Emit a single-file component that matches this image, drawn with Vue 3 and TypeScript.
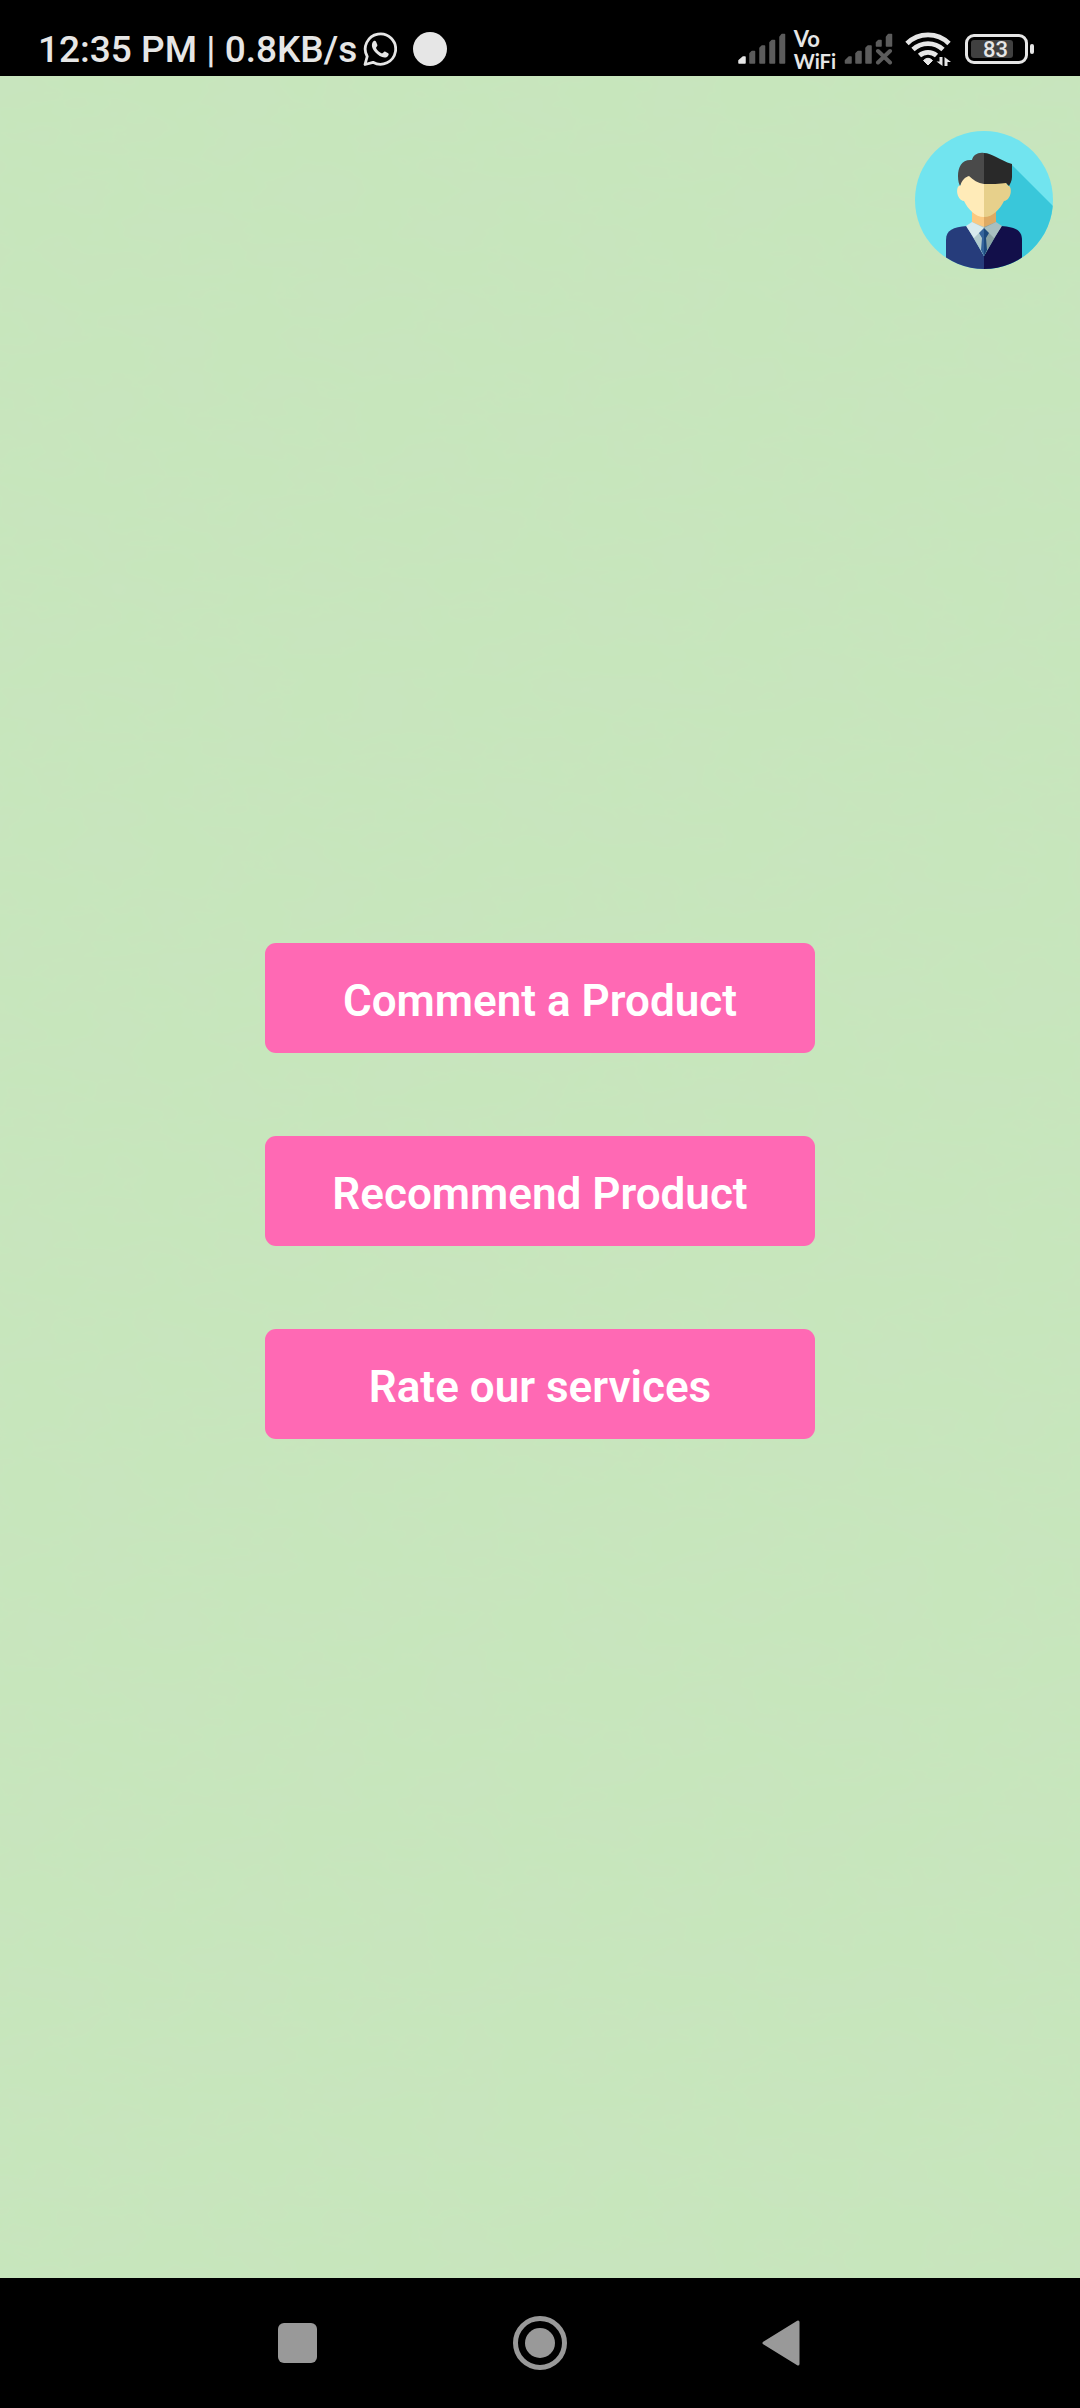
<script setup lang="ts">
interface Action {
  id: string
  label: string
}

const actions: Action[] = [
  { id: 'comment', label: 'Comment a Product' },
  { id: 'recommend', label: 'Recommend Product' },
  { id: 'rate', label: 'Rate our services' },
]
</script>

<template>
  <div class="screen">
    <header class="status">
      <div class="status-left">
        <span class="clock">12:35 PM | 0.8KB/s</span>
        <svg class="whatsapp" width="34" height="36" viewBox="0 0 34 36" aria-hidden="true">
          <path d="M2 33.500 L4.200 25.500 A15.200 15.200 0 1 1 10 31.300 Z" fill="none" stroke="#e6e6e6" stroke-width="2.800" stroke-linejoin="round" />
          <path d="M9.500 11.500 C10.500 9.500 12.500 9.300 13.200 11 L14.400 14 C14.700 15.200 13.200 16 13 17 C14 19.500 16.500 21.600 19 22.500 C20.200 22.400 20.800 20.400 22 20.600 L25.200 22.200 C26.300 23 25.500 25 24 25.900 C20.500 27.800 15.500 24.800 12.500 21.500 C9.500 18.300 8 14.500 9.500 11.500 Z" fill="#e6e6e6" />
        </svg>
        <span class="dot"></span>
      </div>
      <div class="status-right">
        <svg width="48" height="32" viewBox="0 0 48 32" aria-hidden="true">
          <path d="M1 30 V27.500 L5 24 H7 V30 Z" fill="#e6e6e6" stroke="#e6e6e6" stroke-width="1.500" stroke-linejoin="round" />
          <path d="M12 30 V20.500 L14 18.500 H16.500 V30 Z M22 30 V15 L24 13 H26.500 V30 Z M32 30 V9.500 L34 7.500 H36.500 V30 Z M42 30 V4 L44 1.500 H46.500 V30 Z" fill="#5c5c5c" stroke="#5c5c5c" stroke-width="1.500" stroke-linejoin="round" />
        </svg>
        <div class="vowifi"><span class="vo">Vo</span><span>WiFi</span></div>
        <svg width="49" height="32" viewBox="0 0 49 32" aria-hidden="true">
          <path d="M1.500 30 V27.500 L5 24 H7 V30 Z M12 30 V20.500 L14 18.500 H17 V30 Z M22 30 V15 L24 13 H27 V30 Z M32.500 13 V9.500 L34.500 7.500 H37 V13 Z M42.500 13 V4 L44.500 1.500 H47.500 V13 Z" fill="#5c5c5c" stroke="#5c5c5c" stroke-width="1.500" stroke-linejoin="round" />
          <path d="M34 18 L46 29.500 M46 18 L34 29.500" stroke="#5c5c5c" stroke-width="4" stroke-linecap="round" />
        </svg>
        <svg class="wifi" width="47" height="36" viewBox="0 0 47 36" aria-hidden="true">
          <g fill="none" stroke="#e6e6e6" stroke-width="4.800">
            <path d="M2 12.500 A30 30 0 0 1 44 12.500" />
            <path d="M8 18.500 A22 22 0 0 1 38 18.500" />
            <path d="M14.500 24.500 A13 13 0 0 1 31.500 24.500" />
          </g>
          <path d="M18.500 29.500 Q23 25 27.500 29.500 L23 34 Z" fill="#e6e6e6" stroke="#e6e6e6" stroke-linejoin="round" />
          <path d="M37.500 26 V35 L31.500 30.500 H34.500 V26 Z M39.500 35 V26 L46 31 H42.500 V35 Z" fill="#e6e6e6" />
        </svg>
        <div class="battery">
          <span class="battery-body"><span class="battery-level">83</span></span>
          <span class="battery-tip"></span>
        </div>
      </div>
    </header>

    <main class="content">
      <svg class="grain" aria-hidden="true">
        <filter id="paper" x="0" y="0" width="100%" height="100%">
          <feTurbulence type="fractalNoise" baseFrequency="0.014 0.03" numOctaves="3" seed="4" />
          <feColorMatrix values="0 0 0 0 0.6  0 0 0 0 0.76  0 0 0 0 0.55  0.6 0 0 0 -0.19" />
        </filter>
        <rect width="100%" height="100%" filter="url(#paper)" />
      </svg>
      <div class="topbar">
        <button class="avatar" type="button" aria-label="Profile">
          <svg width="138" height="138" viewBox="0 0 138 138" aria-hidden="true">
            <clipPath id="disc"><circle cx="69" cy="69" r="69" /></clipPath>
            <g clip-path="url(#disc)">
              <rect width="138" height="138" fill="#71e4ef" />
              <path d="M96 33 L138 75 V138 H69 V60 Z" fill="#39c7da" />
              <path d="M57 80 H69 V100 H57 Z" fill="#fbc980" />
              <path d="M69 80 H81 V100 H69 Z" fill="#deaa63" />
              <path d="M31 138 V109 C31 99 38 96 52 95 L69 125 V138 Z" fill="#263c7b" />
              <path d="M107 138 V109 C107 99 100 96 86 95 L69 125 V138 Z" fill="#120f4a" />
              <path d="M57 91 L69 96 V125 L52 96 Z" fill="#b1cbcd" />
              <path d="M81 91 L69 96 V125 L86 96 Z" fill="#8aa3a3" />
              <path d="M57 91 L69 97 L59 107 L51 95 Z" fill="#d8ebee" />
              <path d="M81 91 L69 97 L79 107 L87 95 Z" fill="#a8bfc0" />
              <path d="M69 97 L64 102 L67 107 L66 119 L69 125 Z" fill="#35649b" />
              <path d="M69 97 L74 102 L71 107 L72 119 L69 125 Z" fill="#1d4a7d" />
              <path d="M69 42 H46 V54 C40 54 41 69 49 70 C53 78 60 86 69 86 Z" fill="#ffebb8" />
              <path d="M69 42 H92 V54 C98 54 97 69 89 70 C85 78 78 86 69 86 Z" fill="#e7d08b" />
              <path d="M69 22 C63 21 58 24 57 29 C47 28 43 36 43 45 C43 50 44 53 45 55 C47 49 50 46 54 45 C58 49 63 52 69 53 Z" fill="#4a4a4a" />
              <path d="M69 22 C77 22 84 29 97 33 V46 C97 50 95 53 94 55 L91 52 C85 53 76 53 69 53 Z" fill="#292929" />
            </g>
          </svg>
        </button>
      </div>
      <div class="actions">
        <button v-for="action in actions" :key="action.id" class="action" type="button">{{ action.label }}</button>
      </div>
    </main>

    <nav class="navbar" aria-label="System navigation">
      <button type="button" aria-label="Recent apps">
        <svg width="54" height="54" viewBox="0 0 54 54"><rect x="7" y="7" width="39" height="40" rx="6" fill="#999" /></svg>
      </button>
      <button type="button" aria-label="Home">
        <svg width="54" height="54" viewBox="0 0 54 54">
          <circle cx="27" cy="27" r="24.500" fill="none" stroke="#999" stroke-width="5" />
          <circle cx="27" cy="27" r="15" fill="#999" />
        </svg>
      </button>
      <button type="button" aria-label="Back">
        <svg width="54" height="54" viewBox="0 0 54 54"><path d="M9 27 L43 6 V48 Z" fill="#999" stroke="#999" stroke-width="3" stroke-linejoin="round" /></svg>
      </button>
    </nav>
  </div>
</template>

<style>
body {
  margin: 0;
  background: #000;
}
</style>

<style scoped>
.screen {
  display: flex;
  flex-direction: column;
  min-height: 100vh;
  font-family: Roboto, "Liberation Sans", sans-serif;
}

button {
  display: block;
  padding: 0;
  border: 0;
  background: none;
  font: inherit;
  cursor: pointer;
}

svg {
  display: block;
  flex: none;
}

.status {
  display: flex;
  justify-content: space-between;
  box-sizing: border-box;
  height: 76px;
  padding: 28px 46px 0 38px;
  background: #000;
  color: #e6e6e6;
}

.status-left,
.status-right {
  display: flex;
  align-items: center;
  height: 42px;
}

.clock {
  padding-top: 2px;
  font-size: 37px;
  font-weight: 500;
  line-height: 44px;
  white-space: nowrap;
}

.whatsapp {
  margin-left: 6px;
}

.dot {
  width: 34px;
  height: 34px;
  margin-left: 16px;
  border-radius: 50%;
  background: #e6e6e6;
}

.vowifi {
  display: flex;
  flex-direction: column;
  margin: 0 8px;
  font-family: Lato, sans-serif;
  font-size: 20px;
  font-weight: 700;
  line-height: 20px;
}

.vo {
  font-size: 22px;
  line-height: 24px;
}

.wifi {
  margin-left: 12px;
}

.battery {
  display: flex;
  align-items: center;
  gap: 2px;
  margin-left: 13px;
}

.battery-body {
  box-sizing: border-box;
  width: 63px;
  height: 30px;
  padding: 3px;
  border: 3px solid #e6e6e6;
  border-radius: 9px;
}

.battery-level {
  display: block;
  box-sizing: border-box;
  width: 42px;
  height: 18px;
  padding-right: 5px;
  border-radius: 3px;
  background: #404040;
  font-size: 22px;
  font-weight: 500;
  line-height: 19px;
  text-align: right;
}

.battery-tip {
  width: 4px;
  height: 10px;
  border-radius: 2px;
  background: #e6e6e6;
}

.content {
  position: relative;
  display: flex;
  flex: 1;
  flex-direction: column;
  background: #c7e6bc;
}

.grain {
  position: absolute;
  width: 100%;
  height: 100%;
  pointer-events: none;
}

.topbar {
  position: relative;
  display: flex;
  justify-content: flex-end;
  padding: 55px 27px 0;
}

.avatar {
  border-radius: 50%;
}

.actions {
  position: relative;
  display: flex;
  flex: 1;
  flex-direction: column;
  align-items: center;
  justify-content: center;
  gap: 83px;
  padding-bottom: 166px;
}

.action {
  box-sizing: border-box;
  width: 51%;
  height: 110px;
  padding-top: 6px;
  border-radius: 11px;
  background: #ff69b4;
  color: #fff;
  font-size: 44px;
  font-weight: 600;
  line-height: 52px;
}

.navbar {
  display: flex;
  align-items: center;
  justify-content: center;
  gap: 188px;
  height: 130px;
  background: #000;
}
</style>
